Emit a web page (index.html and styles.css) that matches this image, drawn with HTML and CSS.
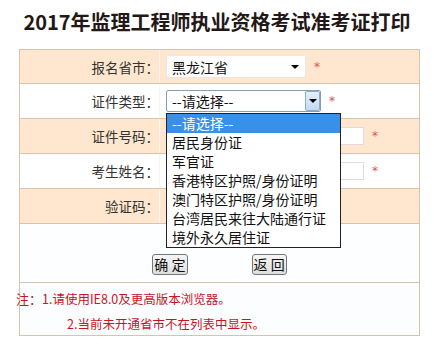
FILE: index.html
```html
<!DOCTYPE html>
<html lang="zh-CN">
<head>
<meta charset="utf-8">
<title>准考证打印</title>
<link rel="stylesheet" href="styles.css">
</head>
<body>
<h1 class="title">2017年监理工程师执业资格考试准考证打印</h1>
<div class="form">
  <div class="row peach first">
    <div class="label">报名省市：</div>
    <div class="field">
      <div class="select plain"><span class="sel-text">黑龙江省</span><span class="arrow"></span></div><span class="req">*</span>
    </div>
  </div>
  <div class="row">
    <div class="label">证件类型：</div>
    <div class="field">
      <div class="select-wrap">
        <div class="select open"><span class="sel-text">--请选择--</span><span class="btn-arrow"><span class="arrow"></span></span></div>
        <ul class="dropdown">
          <li class="active">--请选择--</li>
          <li>居民身份证</li>
          <li>军官证</li>
          <li>香港特区护照/身份证明</li>
          <li>澳门特区护照/身份证明</li>
          <li>台湾居民来往大陆通行证</li>
          <li>境外永久居住证</li>
        </ul>
      </div><span class="req">*</span>
    </div>
  </div>
  <div class="row peach">
    <div class="label">证件号码：</div>
    <div class="field"><span class="input"></span><span class="req">*</span></div>
  </div>
  <div class="row">
    <div class="label">考生姓名：</div>
    <div class="field"><span class="input"></span><span class="req">*</span></div>
  </div>
  <div class="row peach">
    <div class="label">验证码：</div>
    <div class="field"></div>
  </div>
  <div class="btn-row">
    <button class="btn">确 定</button><button class="btn btn-back">返 回</button>
  </div>
  <div class="note-row">
    <p class="note-line first"><span class="note-head">注：</span>1.请使用IE8.0及更高版本浏览器。</p>
    <p class="note-line second">2.当前未开通省市不在列表中显示。</p>
  </div>
</div>
</body>
</html>
```

FILE: styles.css
```css
html, body {
  margin: 0;
  padding: 0;
  background: #ffffff;
}
body {
  width: 434px;
  height: 346px;
  overflow: hidden;
  font-family: "Noto Sans CJK SC", "Noto Sans", sans-serif;
  color: #333333;
}
.title {
  margin: 0;
  height: 49px;
  line-height: 44px;
  font-size: 20px;
  font-weight: bold;
  text-align: center;
  color: #231815;
}
.form {
  margin-left: 19px;
  width: 401px;
  box-sizing: border-box;
  border: 1px solid #d8c4ae;
}
.row {
  display: flex;
  height: 34px;
  border-bottom: 1px solid #d8c4ae;
}
.row.first {
  height: 33px;
}
.peach {
  background: #fee7ce;
}
.label {
  width: 139px;
  flex: none;
  border-right: 1px solid #fff4ea;
  display: flex;
  align-items: center;
  justify-content: flex-end;
  font-size: 13.5px;
  color: #333333;
  white-space: nowrap;
}
.field {
  flex: 1;
  display: flex;
  align-items: center;
  padding-left: 6px;
  font-size: 14px;
  white-space: nowrap;
}
.select {
  display: flex;
  align-items: center;
  box-sizing: border-box;
  background: #ffffff;
  font-size: 14px;
  line-height: 18px;
  color: #111111;
  position: relative;
}
.select.plain {
  width: 140px;
  height: 23px;
  border: 1px solid #ece6e0;
  border-radius: 2px;
  padding-left: 5px;
}
.select.plain .arrow {
  position: absolute;
  right: 6px;
  top: 9px;
}
.arrow {
  display: block;
  width: 0;
  height: 0;
  border-left: 4px solid transparent;
  border-right: 4px solid transparent;
  border-top: 4px solid #000000;
}
.select-wrap {
  position: relative;
}
.select.open {
  width: 155px;
  height: 22px;
  border: 1px solid #8a9db0;
  border-radius: 2px;
  padding-left: 5px;
}
.btn-arrow {
  position: absolute;
  right: 0;
  top: 0;
  bottom: 0;
  width: 15px;
  box-sizing: border-box;
  border: 1px solid #90acc8;
  border-radius: 2px;
  background: linear-gradient(#e4effa, #c3daf0);
  display: flex;
  align-items: center;
  justify-content: center;
}
.dropdown {
  position: absolute;
  left: 0;
  top: 23px;
  z-index: 5;
  margin: 0;
  padding: 0;
  list-style: none;
  width: 175px;
  box-sizing: border-box;
  border: 1px solid #222222;
  background: #ffffff;
}
.dropdown li {
  height: 19px;
  line-height: 19px;
  padding-left: 5px;
  font-size: 14px;
  color: #111111;
}
.dropdown li.active {
  background: #3990e8;
  color: #ffffff;
}
.req {
  margin-left: 8px;
  color: #e05050;
  font-size: 12px;
  line-height: 12px;
  font-family: "DejaVu Sans", sans-serif;
}
.input {
  display: block;
  width: 198px;
  height: 18px;
  box-sizing: border-box;
  border: 1px solid #e2ddd8;
  background: #ffffff;
}
.btn-row {
  height: 58px;
  border-bottom: 1px solid #d8c4ae;
  background: #fdfeff;
  display: flex;
  justify-content: center;
  align-items: flex-start;
  padding-top: 30px;
  box-sizing: border-box;
  height: 59px;
}
.btn {
  height: 21px;
  padding: 0 1px;
  font-family: "Noto Sans CJK SC", sans-serif;
  font-size: 14px;
  line-height: 19px;
  color: #111111;
  border: 1px solid #767676;
  border-radius: 3px;
  background: linear-gradient(#f6f6f6, #dedede);
}
.btn-back {
  margin-left: 64px;
}
.note-row {
  height: 52px;
  background: #fcfdff;
  color: #c8141e;
  font-size: 12.5px;
  padding-top: 3px;
  box-sizing: border-box;
}
.note-line {
  margin: 0;
  line-height: 25px;
  white-space: nowrap;
}
.note-line.first {
  margin-left: -4px;
}
.note-head {
  font-size: 13px;
}
.note-line.second {
  padding-left: 47px;
}
```
